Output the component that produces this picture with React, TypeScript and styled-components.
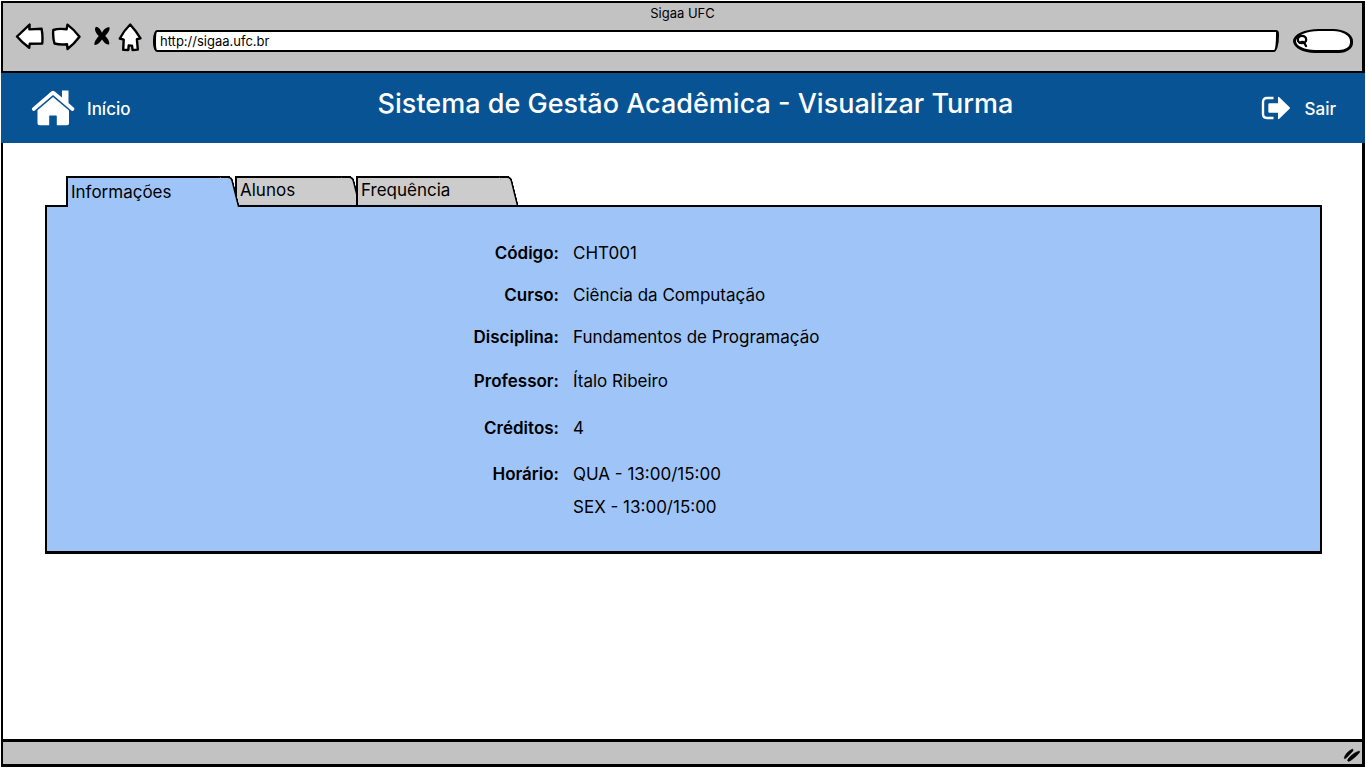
import React, { useState } from "react";
import styled, { createGlobalStyle, css } from "styled-components";

const INK = "#000000";
const CHROME = "#c2c2c2";
const BRAND = "#085394";
const PANEL = "#9fc4f8";

const GlobalStyle = createGlobalStyle`
  *, *::before, *::after { box-sizing: border-box; }
  body {
    margin: 0;
    background: #ffffff;
    color: ${INK};
    font-family: "Inter", "Liberation Sans", sans-serif;
    font-size: 17px;
    line-height: 24px;
  }
  button, input { font: inherit; color: inherit; }
`;

const Window = styled.div`
  display: flex;
  flex-direction: column;
  min-height: 100vh;
  padding: 1px 1px 0;
`;

const TitleBar = styled.div`
  height: 72px;
  background: ${CHROME};
  border: 2px solid ${INK};
  border-right-width: 3px;
`;

const WindowTitle = styled.div`
  font-size: 13px;
  line-height: 20px;
  text-align: center;
`;

const Toolbar = styled.div`
  display: flex;
  align-items: center;
  height: 28px;
  padding: 0 9px 0 12px;
`;

const ToolButtons = styled.div`
  display: flex;
  align-items: center;
  gap: 7px;
  margin-right: 11px;
`;

const ToolButton = styled.button`
  display: flex;
  padding: 0;
  border: 0;
  background: none;
  cursor: pointer;
`;

const fieldFrame = css`
  border: 2px solid ${INK};
  background: #ffffff;
`;

const AddressField = styled.input`
  ${fieldFrame}
  flex: 1;
  min-width: 0;
  height: 22px;
  margin-top: 8px;
  padding: 0 4px;
  border-radius: 4px 3px 5px 4px / 10px 4px 16px 9px;
  border-left-width: 3px;
  border-right-width: 3px;
  font-size: 13px;
  outline: 0;
`;

const SearchBox = styled.label`
  ${fieldFrame}
  display: flex;
  align-items: center;
  width: 60px;
  height: 24px;
  margin: 8px 0 0 14px;
  border-width: 2px 3px 3px;
  border-radius: 26px 20px 14px 22px / 12px 12px 10px 12px;
`;

const SearchInput = styled.input`
  flex: 1;
  min-width: 0;
  height: 16px;
  padding: 0 2px;
  border: 0;
  background: transparent;
  font-size: 13px;
  outline: 0;
`;

const AppHeader = styled.header`
  display: flex;
  align-items: center;
  justify-content: space-between;
  height: 70px;
  padding: 0 29px 0 30px;
  background: ${BRAND};
  color: #ffffff;
`;

const HeaderLink = styled.a<{ $gap: number }>`
  display: flex;
  align-items: center;
  gap: ${(p) => p.$gap}px;
  padding-top: 2px;
  color: inherit;
  font-weight: 500;
  text-decoration: none;
`;

const PageTitle = styled.h1`
  margin: 0;
  padding-bottom: 8px;
  font-size: 27px;
  font-weight: 500;
  line-height: 32px;
`;

const Main = styled.main`
  flex: 1;
  padding: 33px 40px 33px 42px;
  border: solid ${INK};
  border-width: 0 3px 0 2px;
`;

const TabList = styled.div`
  display: flex;
  gap: 5px;
  padding-left: 21px;
`;

const Tab = styled.button<{ $width: number; $active: boolean; $level: number }>`
  position: relative;
  z-index: ${(p) => (p.$active ? 9 : p.$level)};
  display: flex;
  width: ${(p) => p.$width}px;
  height: ${(p) => (p.$active ? 31 : 29)}px;
  margin-bottom: ${(p) => (p.$active ? -2 : 0)}px;
  padding: ${(p) => (p.$active ? 2 : 0)}px 3px 0;
  border: solid ${INK};
  border-width: 2px 0 0 2px;
  background: ${(p) => (p.$active ? PANEL : "#cccccc")};
  cursor: pointer;

  &::after {
    content: "";
    position: absolute;
    top: -2px;
    right: -6px;
    bottom: 0;
    width: 12px;
    border: solid ${INK};
    border-width: 2px 2px 0 0;
    border-top-right-radius: 5px;
    background: inherit;
    transform: skewX(14deg);
  }
`;

const TabPanel = styled.section`
  height: 349px;
  padding: 34px 0 0 14px;
  border: 2px solid ${INK};
  border-bottom-width: 3px;
  background: ${PANEL};
`;

const Details = styled.dl`
  margin: 0;
`;

const DetailRow = styled.div<{ $gap: number }>`
  display: grid;
  grid-template-columns: 2fr 3fr;
  column-gap: 14px;
  margin-bottom: ${(p) => p.$gap}px;
`;

const Term = styled.dt`
  font-weight: 600;
  text-align: right;
`;

const Values = styled.dd`
  display: grid;
  row-gap: 9px;
  margin: 0;
`;

const StatusBar = styled.footer`
  display: flex;
  align-items: center;
  justify-content: flex-end;
  height: 28px;
  margin-bottom: 1px;
  padding: 3px 1px 0 0;
  border: solid ${INK};
  border-width: 3px 3px 3px 2px;
  background: ${CHROME};
`;

const outline = {
  fill: "#ffffff",
  stroke: INK,
  strokeWidth: 2.4,
  strokeLinejoin: "round" as const,
};

const BackIcon = () => (
  <svg width="29" height="28" viewBox="0 0 29 28" aria-hidden="true">
    <path {...outline} d="M2 13.5 14.6 1.6 14.4 6.4 26.6 5.7Q28 13 27.2 20.6L14.8 20.7 14.2 24.8Q7 19.500 2 13.500Z" />
  </svg>
);

const ForwardIcon = () => (
  <svg width="30" height="28" viewBox="0 0 30 28" aria-hidden="true">
    <path {...outline} d="M2.300 7Q7 5.300 15.600 6.200L16.500 1.600Q23 6.500 28.500 13.700 23 21 16.500 26L16 21.200Q9 21.900 3.500 20.500 1.600 14 2.300 7Z" />
  </svg>
);

const StopIcon = () => (
  <svg width="23" height="24" viewBox="-5 0 23 24" aria-hidden="true">
    <path
      fill={INK}
      d="M3 1.800C5.500 2 7.500 4.500 9 7.700 10.300 4.700 13 2 16.500 2.200 17.200 5.500 14.300 8.500 12.200 11 14.500 13 16.700 16.500 16.300 19.200 13.500 20.300 11 17.500 9 14.500 7 17.500 4.500 20.300 1.500 20 .800 17 3.700 13.500 5.800 11 3 8.500 .600 4.200 3 1.800Z"
    />
  </svg>
);

const HomeIcon = () => (
  <svg width="24" height="29" viewBox="0 0 24 29" aria-hidden="true">
    <path {...outline} d="M12.200 1.500Q18 8 22.500 15.300L18.900 16.200 19.800 26.600 14.600 27 14 22.600 10.700 22.500 10.300 27 5.200 26.900 5.700 16.600 1.800 15.500Q6 7.500 12.200 1.500Z" />
  </svg>
);

const SearchIcon = () => (
  <svg width="14" height="16" viewBox="0 0 14 16" aria-hidden="true">
    <g fill="none" stroke={INK} strokeWidth="2.300" strokeLinecap="round">
      <ellipse cx="6" cy="6.500" rx="4.200" ry="3.700" />
      <path d="M3.800 9.700Q7 8.200 8.300 10L10 13" />
    </g>
  </svg>
);

const HouseIcon = () => (
  <svg width="44" height="38" viewBox="0 0 44 38" fill="#ffffff" aria-hidden="true">
    <path d="M1.200 17.900 20.600 1.200Q22 .100 23.400 1.200L31 7.600V.500H37.500V13.100L43.200 17.900Q44 19 42.500 20.600 41.500 21.500 40.600 20.800L22 5 3.500 20.700Q2.500 21.400 1.600 20.500 .200 18.900 1.200 17.900Z" />
    <path d="M22 7.100 38 20.600V33.500Q38 35.300 36 35.300H25.800V26.200Q25.800 25.500 25.100 25.500H18.900Q18.200 25.500 18.200 26.200V35.300H8.500Q6.500 35.300 6.500 33.500V20.300Z" />
  </svg>
);

const ExitIcon = () => (
  <svg width="30" height="26" viewBox="0 0 30 26" aria-hidden="true">
    <path fill="none" stroke="#ffffff" strokeWidth="2.400" d="M12.500 2H6Q2 2 2 6V18Q2 22 6 22H12.500" />
    <path
      fill="#ffffff"
      d="M8.500 7.200H17V1.800Q17 .300 18.300 1.200L28.600 11.300Q29.300 12 28.600 12.700L18.300 22.800Q17 23.700 17 22.200V16.700H8.500Q7.300 16.700 7.300 15.500V8.400Q7.300 7.200 8.500 7.200Z"
    />
  </svg>
);

const ResizeGrip = () => (
  <svg width="18" height="14" viewBox="0 0 18 14" aria-hidden="true">
    <g fill={INK} stroke={INK} strokeWidth=".6">
      <path d="M1.300 9.700C2.200 6.500 5.500 2.500 9.500 1.200 11 1.500 9.800 3.300 8.200 4.800 6 7 4 9.800 1.700 10.800Z" />
      <path d="M4.500 12.500C5.200 9.500 11.500 4.200 16.300 3 17.400 4 15.500 6 13.500 7.700 10.500 10.300 8 12.700 5.500 13.400Z" />
    </g>
  </svg>
);

const tools = [
  { label: "Voltar", Icon: BackIcon },
  { label: "Avançar", Icon: ForwardIcon },
  { label: "Parar", Icon: StopIcon },
  { label: "Página inicial", Icon: HomeIcon },
];

const tabs = [
  { label: "Informações", width: 164 },
  { label: "Alunos", width: 116 },
  { label: "Frequência", width: 153 },
];

const details = [
  { term: "Código:", values: ["CHT001"], gap: 18 },
  { term: "Curso:", values: ["Ciência da Computação"], gap: 18 },
  { term: "Disciplina:", values: ["Fundamentos de Programação"], gap: 20 },
  { term: "Professor:", values: ["Ítalo Ribeiro"], gap: 23 },
  { term: "Créditos:", values: ["4"], gap: 22 },
  { term: "Horário:", values: ["QUA - 13:00/15:00", "SEX - 13:00/15:00"], gap: 0 },
];

export default function App() {
  const [active, setActive] = useState(0);

  return (
    <>
      <GlobalStyle />
      <Window>
        <TitleBar>
          <WindowTitle>Sigaa UFC</WindowTitle>
          <Toolbar>
            <ToolButtons>
              {tools.map(({ label, Icon }) => (
                <ToolButton key={label} type="button" aria-label={label}>
                  <Icon />
                </ToolButton>
              ))}
            </ToolButtons>
            <AddressField type="text" aria-label="Endereço" defaultValue="http://sigaa.ufc.br" />
            <SearchBox>
              <SearchIcon />
              <SearchInput type="text" aria-label="Pesquisar" />
            </SearchBox>
          </Toolbar>
        </TitleBar>

        <AppHeader>
          <HeaderLink href="#inicio" $gap={12}>
            <HouseIcon />
            Início
          </HeaderLink>
          <PageTitle>Sistema de Gestão Acadêmica - Visualizar Turma</PageTitle>
          <HeaderLink href="#sair" $gap={14}>
            <ExitIcon />
            Sair
          </HeaderLink>
        </AppHeader>

        <Main>
          <TabList role="tablist">
            {tabs.map((tab, index) => (
              <Tab
                key={tab.label}
                type="button"
                role="tab"
                aria-selected={index === active}
                $active={index === active}
                $level={index + 1}
                $width={tab.width}
                onClick={() => setActive(index)}
              >
                {tab.label}
              </Tab>
            ))}
          </TabList>
          <TabPanel role="tabpanel" aria-label={tabs[active].label}>
            <Details>
              {details.map((row) => (
                <DetailRow key={row.term} $gap={row.gap}>
                  <Term>{row.term}</Term>
                  <Values>
                    {row.values.map((value) => (
                      <span key={value}>{value}</span>
                    ))}
                  </Values>
                </DetailRow>
              ))}
            </Details>
          </TabPanel>
        </Main>

        <StatusBar>
          <ResizeGrip />
        </StatusBar>
      </Window>
    </>
  );
}
